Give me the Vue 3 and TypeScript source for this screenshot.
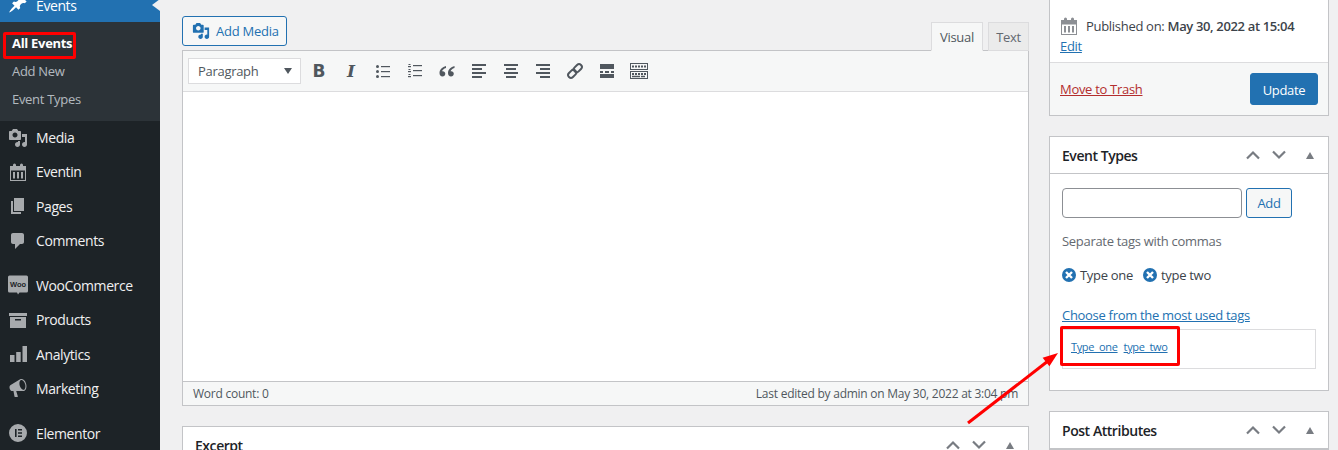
<script setup lang="ts">
interface MenuItem { label: string; icon: string; sepBefore?: boolean }
const menu: MenuItem[] = [
  { label: 'Media', icon: 'media' },
  { label: 'Eventin', icon: 'calendar' },
  { label: 'Pages', icon: 'pages' },
  { label: 'Comments', icon: 'comments' },
  { label: 'WooCommerce', icon: 'woo', sepBefore: true },
  { label: 'Products', icon: 'products' },
  { label: 'Analytics', icon: 'analytics' },
  { label: 'Marketing', icon: 'marketing' },
  { label: 'Elementor', icon: 'elementor', sepBefore: true },
]
const mediaPath = 'M13 11V4c0-.55-.45-1-1-1h-1.67L9 1H5L3.67 3H2c-.55 0-1 .45-1 1v7c0 .55.45 1 1 1h10c.55 0 1-.45 1-1zM7 4.5c1.38 0 2.5 1.12 2.5 2.5S8.38 9.5 7 9.5 4.5 8.38 4.5 7 5.62 4.5 7 4.5zM14 6h5v10.5c0 1.38-1.12 2.5-2.5 2.5S14 17.88 14 16.5s1.12-2.5 2.5-2.5c.17 0 .34.02.5.05V9h-3V6zm-4 8.05V13h2v3.5c0 1.38-1.12 2.5-2.5 2.5S7 17.88 7 16.5 8.12 14 9.5 14c.17 0 .34.02.5.05z'
const calendarPath = 'M2 4h3V3a1.5 1.5 0 013 0v1h4V3a1.5 1.5 0 013 0v1h3v15H2V4zm1 4.5V18h14V8.5H3zM5 10h2v6.5H5V10zm4 0h2v6.5H9V10zm4 0h2v6.5h-2V10z'
const paths: Record<string, string> = {
  media: mediaPath,
  calendar: calendarPath,
  pages: 'M6 15V2h10v13H6zm-1 1h8v2H3V5h2v11z',
  comments: 'M5 2h9c1.1 0 2 .9 2 2v7c0 1.1-.9 2-2 2h-2l-5 5v-5H5c-1.1 0-2-.9-2-2V4c0-1.1.9-2 2-2z',
  products: 'M1 3h18v3H1V3zm1 4h16v11H2V7zm5 2v1.5h6V9H7z',
  analytics: 'M2 11h4.5v7H2v-7zm6.2-3h4.5v10H8.2V8zm6.3-6H19v16h-4.5V2z',
  marketing: 'M18.15 5.94c.46 1.62.38 3.22-.02 4.48-.42 1.28-1.26 2.18-2.3 2.48-.16.06-.26.06-.4.06-.06.02-.12.02-.18.02-.06.02-.14.02-.22.02H8.2l1.7 5.5c.02.14-.06.26-.14.34-.08.1-.24.16-.34.16H6.95c-.1 0-.26-.06-.34-.16-.08-.08-.16-.2-.14-.34l-1-5.5H4.25c-.5.06-1.08-.18-1.54-.62s-.88-1.08-1.06-1.88c-.24-.8-.2-1.56-.02-2.2.18-.62.58-1.08 1.06-1.3l9.02-5.42c.1-.06.18-.1.24-.16.16-.08.28-.12.74-.3 1.04-.3 2.24.1 3.22 1 .98.88 1.76 2.18 2.2 3.78zm-2.6 5.98c.4-.1.74-.34 1.04-.7.58-.7.86-1.76.86-3.04-.02-.64-.1-1.3-.28-1.98-.34-1.36-1.02-2.5-1.78-3.24-.38-.38-.76-.66-1.18-.82-.4-.16-.8-.2-1.14-.12-.64.16-1.1.68-1.38 1.46-.3.78-.38 1.84-.22 2.96.04.34.12.68.22 1.04.12.34.24.66.36.96.38.98.9 1.8 1.48 2.4.6.6 1.22.94 1.84.96.08 0 .14 0 .18-.02z',
  elementor: 'M10 1a9 9 0 100 18 9 9 0 000-18zM7 6h1.6v8H7V6zm3 0h4v1.6h-4V6zm0 3.2h4v1.6h-4V9.2zm0 3.2h4V14h-4v-1.6z',
}
const lineRows = [1, 5, 9, 13]
</script>

<template>
  <div class="page">
    <aside class="sidebar">
      <a class="current">
        <svg class="menu-icon pin" viewBox="0 0 20 20"><path fill="#fff" d="M10.44 3.02l1.82-1.82 6.36 6.35-1.83 1.82c-1.05-.68-2.48-.57-3.41.36l-.75.75c-.92.93-1.04 2.35-.35 3.41l-1.83 1.82-2.41-2.41-2.8 2.79c-.42.42-3.38 2.71-3.8 2.29s1.86-3.39 2.28-3.81l2.79-2.79L4.1 9.36l1.83-1.82c1.05.69 2.48.57 3.4-.36l.75-.75c.93-.92 1.05-2.35.36-3.41z" /></svg>
        <span>Events</span>
        <i class="pointer"></i>
      </a>
      <div class="submenu">
        <a class="sub active">All Events</a>
        <a class="sub">Add New</a>
        <a class="sub">Event Types</a>
      </div>
      <a v-for="item in menu" :key="item.label" class="item" :class="{ sep: item.sepBefore }">
        <svg v-if="item.icon === 'woo'" class="menu-icon" viewBox="0 0 20 20">
          <path fill="#a7aaad" d="M1.5 0.5h17a1.5 1.5 0 011.5 1.500v14a1.500 1.500 0 01-1.500 1.500H11.500L10 19.500 9 17.500H1.500A1.500 1.500 0 010 16V2A1.500 1.500 0 011.500.500z" />
          <text x="10" y="11.500" text-anchor="middle" class="woo-text">Woo</text>
        </svg>
        <svg v-else class="menu-icon" viewBox="0 0 20 20"><path fill="#a7aaad" fill-rule="evenodd" :d="paths[item.icon]" /></svg>
        <span>{{ item.label }}</span>
      </a>
    </aside>

    <main class="content">
      <section class="editor-col">
        <div class="editor-tools">
          <button class="add-media">
            <svg viewBox="0 0 20 20" width="18" height="18"><path fill="#2271b1" :d="mediaPath" /></svg>
            Add Media
          </button>
          <div class="tabs">
            <span class="tab on">Visual</span>
            <span class="tab">Text</span>
          </div>
        </div>
        <div class="editor">
          <div class="toolbar">
            <div class="format"><span>Paragraph</span><i class="caret"></i></div>
            <span class="tool glyph bold">B</span>
            <span class="tool glyph ital">I</span>
            <span class="tool">
              <svg viewBox="0 0 16 16" width="16" height="16">
                <g v-for="y in [2, 7, 12]" :key="y" fill="#50575e"><rect x="1" :y="y" width="3" height="3" rx="1.500" /><rect x="6" :y="y + 1" width="9" height="1.200" /></g>
              </svg>
            </span>
            <span class="tool">
              <svg viewBox="0 0 16 16" width="16" height="16">
                <g v-for="y in [2, 7, 12]" :key="y" fill="#50575e"><rect x="1.500" :y="y - 1" width="2" height="1" /><rect x="1" :y="y + 1" width="3" height="1.200" /><rect x="6" :y="y" width="9" height="1.200" /></g>
              </svg>
            </span>
            <span class="tool">
              <svg viewBox="0 0 18 18" width="18" height="18"><path fill="#50575e" d="M8 4C4.500 5 1.500 7.500 1.500 11c0 2 1.200 3.500 3 3.500 1.600 0 2.800-1.200 2.800-2.700 0-1.500-1.100-2.600-2.500-2.600-.300 0-.500 0-.700.100.300-1.300 1.700-2.700 3.900-3.300zM16.500 4c-3.500 1-6.500 3.500-6.500 7 0 2 1.200 3.500 3 3.500 1.600 0 2.800-1.200 2.800-2.700 0-1.500-1.100-2.600-2.500-2.600-.300 0-.500 0-.700.100.300-1.300 1.700-2.700 3.900-3.300z" /></svg>
            </span>
            <span class="tool">
              <svg viewBox="0 0 16 16" width="16" height="16"><rect v-for="(y, i) in lineRows" :key="y" x="1" :y="y" :width="i % 2 ? 10 : 14" height="2" fill="#50575e" /></svg>
            </span>
            <span class="tool">
              <svg viewBox="0 0 16 16" width="16" height="16"><rect v-for="(y, i) in lineRows" :key="y" :x="i % 2 ? 3 : 1" :y="y" :width="i % 2 ? 10 : 14" height="2" fill="#50575e" /></svg>
            </span>
            <span class="tool">
              <svg viewBox="0 0 16 16" width="16" height="16"><rect v-for="(y, i) in lineRows" :key="y" :x="i % 2 ? 5 : 1" :y="y" :width="i % 2 ? 10 : 14" height="2" fill="#50575e" /></svg>
            </span>
            <span class="tool">
              <svg viewBox="0 0 18 18" width="18" height="18"><g fill="none" stroke="#50575e" stroke-width="2" transform="rotate(-45 9 9)"><rect x="0.500" y="6.200" width="9" height="5.600" rx="2.800" /><rect x="8.500" y="6.200" width="9" height="5.600" rx="2.800" /></g></svg>
            </span>
            <span class="tool">
              <svg viewBox="0 0 14 14" width="14" height="14"><path fill="#50575e" d="M0 0h14v5H0zM0 7h3v2H0zM5 7h4v2H5zM11 7h3v2h-3zM0 10h14v4H0z" /></svg>
            </span>
            <span class="tool">
              <svg viewBox="0 0 18 16" width="18" height="16">
                <g fill="none" stroke="#50575e"><rect x="0.500" y="0.500" width="17" height="6" /><rect x="0.500" y="8.500" width="17" height="7" /></g>
                <path stroke="#50575e" stroke-width="2" stroke-dasharray="2 1" d="M2 3.500h14M2 11h14" />
                <path stroke="#50575e" stroke-width="1.500" stroke-dasharray="8 1 4 1" d="M2 13.500h14" />
              </svg>
            </span>
          </div>
          <div class="canvas"></div>
          <div class="status">
            <span>Word count: 0</span>
            <span>Last edited by admin on May 30, 2022 at 3:04 pm</span>
          </div>
        </div>
        <div class="box excerpt">
          <div class="box-head">
            <h2>Excerpt</h2>
            <div class="handles">
              <svg viewBox="0 0 16 10" width="16" height="10" class="h-icon"><path d="M2 8.500l6-6 6 6" /></svg>
              <svg viewBox="0 0 16 10" width="16" height="10" class="h-icon"><path d="M2 1.500l6 6 6-6" /></svg>
              <i class="tri"></i>
            </div>
          </div>
        </div>
      </section>

      <section class="side-col">
        <div class="box publish">
          <div class="pub-body">
            <div class="pub-row">
              <svg viewBox="0 0 20 20" width="20" height="20"><path fill="#8c8f94" fill-rule="evenodd" :d="calendarPath" /></svg>
              <span>Published on: <b>May 30, 2022 at 15:04</b></span>
            </div>
            <a class="link">Edit</a>
          </div>
          <div class="pub-foot">
            <a class="trash">Move to Trash</a>
            <button class="update">Update</button>
          </div>
        </div>

        <div class="box types">
          <div class="box-head side">
            <h2>Event Types</h2>
            <div class="handles">
              <svg viewBox="0 0 16 10" width="16" height="10" class="h-icon"><path d="M2 8.500l6-6 6 6" /></svg>
              <svg viewBox="0 0 16 10" width="16" height="10" class="h-icon"><path d="M2 1.500l6 6 6-6" /></svg>
              <i class="tri"></i>
            </div>
          </div>
          <div class="types-body">
            <div class="tag-add">
              <input class="tag-input" type="text" />
              <button class="add-btn">Add</button>
            </div>
            <p class="howto">Separate tags with commas</p>
            <div class="tags">
              <span v-for="t in ['Type one', 'type two']" :key="t" class="tag">
                <svg viewBox="0 0 14 14" width="14" height="14"><circle cx="7" cy="7" r="7" fill="#2271b1" /><path d="M4 4l6 6M10 4l-6 6" stroke="#fff" stroke-width="2.400" /></svg>
                {{ t }}
              </span>
            </div>
            <a class="link choose">Choose from the most used tags</a>
            <div class="cloud">
              <a class="link">Type&nbsp; one</a>
              <a class="link">type&nbsp; two</a>
            </div>
          </div>
        </div>

        <div class="box attrs">
          <div class="box-head side">
            <h2>Post Attributes</h2>
            <div class="handles">
              <svg viewBox="0 0 16 10" width="16" height="10" class="h-icon"><path d="M2 8.500l6-6 6 6" /></svg>
              <svg viewBox="0 0 16 10" width="16" height="10" class="h-icon"><path d="M2 1.500l6 6 6-6" /></svg>
              <i class="tri"></i>
            </div>
          </div>
        </div>
      </section>
    </main>

    <i class="mark mark-menu"></i>
    <i class="mark mark-cloud"></i>
    <svg class="arrow" viewBox="0 0 1338 450" width="1338" height="450">
      <path d="M968 423L1048 361" stroke="#f00" stroke-width="3" fill="none" />
      <path d="M1058 353L1049.400 366.300 1042.600 357.700z" fill="#f00" />
    </svg>
  </div>
</template>

<style>
html, body { background: #f0f0f1; }
</style>

<style scoped>
.page {
  position: relative;
  display: flex;
  width: 1338px;
  height: 450px;
  overflow: hidden;
  background: #f0f0f1;
  font-family: "Open Sans", "Noto Sans", sans-serif;
  font-size: 13px;
  letter-spacing: -0.3px;
  color: #3c434a;
}
.sidebar {
  flex: 0 0 160px;
  background: #1d2327;
  color: #f0f0f1;
}
.current {
  position: relative;
  display: flex;
  align-items: center;
  gap: 9px;
  height: 34px;
  margin-top: -12px;
  padding-left: 9px;
  background: #2271b1;
  color: #fff;
  font-size: 14px;
  letter-spacing: -0.4px;
}
.pin { transform: translateY(-1px); }
.pointer {
  position: absolute;
  right: 0;
  top: 11px;
  border: 6px solid transparent;
  border-left: 0;
  border-right: 8px solid #f0f0f1;
}
.menu-icon { width: 20px; height: 20px; flex: none; margin: 0 -1px; }
.woo-text { font-family: "Liberation Sans", sans-serif; font-size: 7.5px; font-weight: 700; fill: #1d2327; letter-spacing: 0; }
.submenu {
  background: #2c3338;
  padding: 8px 0 7px;
}
.sub {
  display: flex;
  align-items: center;
  box-sizing: border-box;
  height: 28px;
  padding: 0 0 2px 12px;
  color: rgba(240, 246, 252, .7);
}
.sub.active { color: #fff; font-weight: 700; }
.item {
  display: flex;
  align-items: center;
  gap: 9px;
  box-sizing: border-box;
  height: 34.33px;
  padding: 0 0 1px 9px;
  font-size: 14px;
  letter-spacing: -0.4px;
}
.item.sep { margin-top: 10.500px; }
.content {
  flex: 1;
  display: flex;
  gap: 20px;
  padding-left: 22px;
}
.editor-col { flex: 0 0 847px; padding-top: 16px; }
.side-col { flex: 0 0 280px; display: flex; flex-direction: column; gap: 20px; }
.editor-tools {
  display: flex;
  justify-content: space-between;
  align-items: flex-end;
  height: 35px;
  margin-bottom: -1px;
  position: relative;
  z-index: 1;
}
.add-media {
  align-self: flex-start;
  display: flex;
  align-items: center;
  gap: 6px;
  width: 105px;
  height: 30px;
  padding: 0 0 0 9px;
  border: 1px solid #2271b1;
  border-radius: 3px;
  background: #f6f7f7;
  color: #2271b1;
  font: inherit;
  letter-spacing: -0.25px;
}
.tabs { display: flex; gap: 5px; }
.tab {
  display: flex;
  align-items: center;
  justify-content: center;
  height: 29px;
  width: 41px;
  border: 1px solid #dcdcde;
  background: #ebebeb;
  color: #646970;
  box-sizing: border-box;
}
.tab.on {
  width: 52px;
  background: #f6f7f7;
  border-bottom-color: #f6f7f7;
  color: #50575e;
}
.editor {
  border: 1px solid #c3c4c7;
  background: #fff;
}
.toolbar {
  display: flex;
  align-items: center;
  height: 40px;
  padding-left: 5px;
  background: #f6f7f7;
  border-bottom: 1px solid #dcdcde;
}
.format {
  display: flex;
  align-items: center;
  justify-content: space-between;
  box-sizing: border-box;
  width: 113px;
  height: 26px;
  margin-right: 2px;
  padding: 0 8px 0 9px;
  border: 1px solid #dcdcde;
  background: #fff;
  color: #50575e;
}
.caret {
  border: 4.500px solid transparent;
  border-top: 6px solid #50575e;
  border-bottom: 0;
}
.tool {
  display: flex;
  align-items: center;
  justify-content: center;
  flex: 0 0 32px;
  height: 30px;
}
.glyph { color: #50575e; font-size: 18px; line-height: 1; letter-spacing: 0; }
.bold { font-family: "DejaVu Sans", sans-serif; font-weight: 700; font-size: 17px; }
.ital { font-family: "DejaVu Serif", serif; font-style: italic; font-weight: 700; font-size: 17px; }
.canvas { height: 289px; }
.status {
  display: flex;
  justify-content: space-between;
  align-items: center;
  height: 23px;
  padding: 0 10px;
  border-top: 1px solid #c3c4c7;
  background: #f6f7f7;
  font-size: 12px;
  letter-spacing: -0.25px;
  color: #50575e;
}
.box {
  border: 1px solid #c3c4c7;
  background: #fff;
}
.excerpt { margin-top: 20px; height: 60px; }
.box-head {
  display: flex;
  align-items: center;
  justify-content: space-between;
  height: 36px;
  padding: 0 14.500px 0 12px;
}
.box-head.side { border-bottom: 1px solid #c3c4c7; }
.box-head h2 {
  margin: 0;
  font-size: 14px;
  font-weight: 600;
  letter-spacing: -0.45px;
  color: #1d2327;
}
.handles { display: flex; align-items: center; gap: 10px; }
.h-icon { fill: none; stroke: #787c82; stroke-width: 2.200; }
.tri {
  margin-left: 9px;
  border: 4.500px solid transparent;
  border-bottom: 7px solid #787c82;
  border-top: 0;
}
.publish { border-top: 0; }
.pub-body {
  box-sizing: border-box;
  height: 63px;
  padding: 16px 10px 0;
  line-height: 20px;
  border-bottom: 1px solid #dcdcde;
}
.pub-row { display: flex; align-items: center; gap: 7px; margin-left: -1px; }
.pub-row b { font-weight: 600; color: #3c434a; letter-spacing: -0.35px; }
.link { color: #2271b1; text-decoration: underline; display: inline-block; }
.pub-foot {
  display: flex;
  align-items: center;
  justify-content: space-between;
  height: 52px;
  padding: 0 10px;
  background: #f6f7f7;
}
.trash { color: #b32d2e; text-decoration: underline; }
.update {
  width: 68px;
  height: 32px;
  padding: 1px 0 0;
  border: 1px solid #2271b1;
  border-radius: 3px;
  background: #2271b1;
  color: #fff;
  font: inherit;
  letter-spacing: inherit;
}
.types-body { padding: 14px 12px 0; height: 216px; box-sizing: border-box; }
.tag-add { display: flex; gap: 4px; }
.tag-input {
  box-sizing: border-box;
  width: 180px;
  height: 30px;
  border: 1px solid #8c8f94;
  border-radius: 4px;
  background: #fff;
  margin: 0;
}
.add-btn {
  width: 46px;
  height: 30px;
  border: 1px solid #2271b1;
  border-radius: 3px;
  background: #f6f7f7;
  color: #2271b1;
  font: inherit;
  letter-spacing: inherit;
  padding: 0;
}
.howto { margin: 13px 0 0; line-height: 20px; color: #646970; }
.tags { display: flex; gap: 10px; margin-top: 14px; line-height: 20px; }
.tag { display: flex; align-items: center; gap: 4px; }
.choose { margin-top: 20px; line-height: 20px; }
.cloud {
  display: flex;
  gap: 6px;
  box-sizing: border-box;
  width: 254px;
  height: 40px;
  margin-top: 4px;
  padding: 7px 8px;
  border: 1px solid #dcdcde;
  font-size: 11px;
  line-height: 20px;
  letter-spacing: -0.35px;
}
.mark { position: absolute; box-sizing: border-box; border: 3px solid #f00; border-radius: 2px; }
.mark-menu { left: 3px; top: 32px; width: 73px; height: 27px; }
.mark-cloud { left: 1060px; top: 326px; width: 120px; height: 40px; }
.arrow { position: absolute; left: 0; top: 0; pointer-events: none; }
</style>
